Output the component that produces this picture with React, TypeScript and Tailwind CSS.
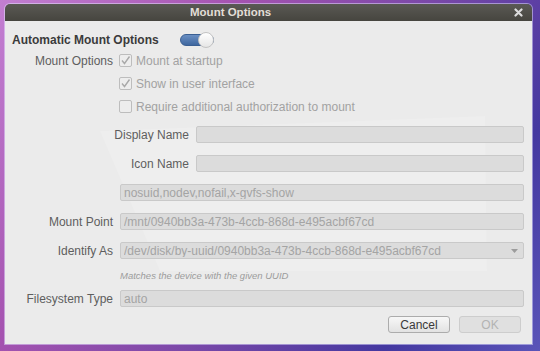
import type { ReactNode } from "react";

const font = { fontFamily: '"Liberation Sans", Arial, sans-serif' };

// Small disabled-looking checkbox, optionally ticked
const CheckBox = ({ checked, label }: { checked: boolean; label: string }) => (
  <div className="flex items-center gap-[4px]">
    <div className="w-[13px] h-[13px] rounded-[2px] border border-[#bdbdbd] bg-[#ededed] flex items-center justify-center">
      {checked && (
        <svg width="11" height="11" viewBox="0 0 11 11">
          <path d="M2 5.5 L4.5 8.5 L9.5 1.5" fill="none" stroke="#a9a9a9" strokeWidth="1.4" />
        </svg>
      )}
    </div>
    <span className="text-[12px] text-[#a2a2a2]">{label}</span>
  </div>
);

const Entry = ({ value, children }: { value?: string; children?: ReactNode }) => (
  <div className="flex-1 h-[17px] rounded-[2px] border border-[#c9c9c9] bg-[#dcdcdc] flex items-center pl-[3px] pr-[5px]">
    <span className="flex-1 text-[12px] text-[#a4a4a4] leading-none truncate">{value}</span>
    {children}
  </div>
);

// Labelled form row: label right-aligned in a fixed column
const Row = ({ label, labelWidth = 101, children }: { label: string; labelWidth?: number; children: ReactNode }) => (
  <div className="flex items-center h-[17px] gap-[7px] mt-[12px]">
    <span className="text-[12px] leading-none text-[#5e5e5e] text-right shrink-0" style={{ width: labelWidth }}>
      {label}
    </span>
    {children}
  </div>
);

export default function App() {
  return (
    <div
      className="w-[540px] h-[351px] overflow-hidden pt-[4px] pl-[5px] bg-[linear-gradient(125deg,#c37fd2_0%,#a553b0_30%,#7a48a8_55%,#4438a0_80%,#5a54b8_100%)]"
      style={font}
    >
      <div className="w-[527px] h-[340px] rounded-t-[5px] overflow-hidden flex flex-col shadow-[0_0_0_1px_rgba(230,230,255,0.5)]">
        {/* Title bar */}
        <div className="h-[17px] shrink-0 bg-[linear-gradient(#5a5954,#46453f)] flex items-center justify-between pl-[185px] pr-[9px]">
          <span className="text-[11.5px] font-bold text-[#e2ded6]">Mount Options</span>
          <svg width="9" height="9" viewBox="0 0 9 9">
            <path d="M1.5 1.5 L7.5 7.5 M7.5 1.5 L1.5 7.5" stroke="#dcdcdc" strokeWidth="2.2" strokeLinecap="round" />
          </svg>
        </div>

        {/* Body */}
        <div className="relative flex-1 bg-[#ebebeb] pl-[7px] pr-[8px] pt-[10px]">
          <div className="pointer-events-none absolute inset-0 bg-white/15 [clip-path:polygon(95px_110px,480px_95px,482px_250px,155px_250px)]" />

          <div className="relative">
            <div className="h-[18px] flex items-center">
              <span className="text-[12px] font-bold text-[#3b3b3b]">Automatic Mount Options</span>
              <div className="ml-[21px] relative w-[34px] h-[12px] rounded-full bg-[linear-gradient(#6a8fc3,#3f679f)] border border-[#3a5f93]">
                <div className="absolute right-[-1px] top-[-3px] w-[16px] h-[16px] rounded-full bg-[linear-gradient(#ffffff,#e6e6e6)] border border-[#c4c4c4]" />
              </div>
            </div>

            <div className="flex">
              <div className="w-[101px] h-[23px] flex items-center justify-end text-[12px] text-[#5e5e5e]">
                Mount Options
              </div>
              <div className="ml-[6px] flex flex-col">
                <div className="h-[23px] flex items-center">
                  <CheckBox checked label="Mount at startup" />
                </div>
                <div className="h-[23px] flex items-center">
                  <CheckBox checked label="Show in user interface" />
                </div>
                <div className="h-[23px] flex items-center">
                  <CheckBox checked={false} label="Require additional authorization to mount" />
                </div>
              </div>
            </div>

            <div className="mt-[-4px]">
              <Row label="Display Name" labelWidth={177}>
                <Entry />
              </Row>
              <Row label="Icon Name" labelWidth={177}>
                <Entry />
              </Row>
              <div className="flex h-[17px] mt-[12px] pl-[108px]">
                <Entry value="nosuid,nodev,nofail,x-gvfs-show" />
              </div>
              <Row label="Mount Point">
                <Entry value="/mnt/0940bb3a-473b-4ccb-868d-e495acbf67cd" />
              </Row>
              <Row label="Identify As">
                <Entry value="/dev/disk/by-uuid/0940bb3a-473b-4ccb-868d-e495acbf67cd">
                  <svg width="7" height="4" viewBox="0 0 7 4">
                    <path d="M0 0 L7 0 L3.5 4 Z" fill="#9c9c9c" />
                  </svg>
                </Entry>
              </Row>
              <div className="pl-[108px] h-[14px] mt-[10px] flex items-center">
                <span className="text-[9.5px] italic text-[#9c9c9c]">Matches the device with the given UUID</span>
              </div>
              <div className="flex items-center h-[17px] gap-[7px] mt-[7px]">
                <span className="w-[101px] text-[12px] leading-none text-[#5e5e5e] text-right shrink-0">Filesystem Type</span>
                <Entry value="auto" />
              </div>
            </div>

            <div className="flex justify-end gap-[9px] mt-[9px] pr-[3px]">
              <button className="w-[62px] h-[17px] rounded-[3px] border border-[#acacac] bg-[linear-gradient(#f7f7f7,#e2e2e2)] text-[12px] text-[#3a3a3a] leading-none">
                Cancel
              </button>
              <button className="w-[62px] h-[17px] rounded-[3px] border border-[#cdcdcd] bg-[#e0e0e0] text-[12px] text-[#b3b3b3] leading-none">
                OK
              </button>
            </div>
          </div>
        </div>
      </div>
    </div>
  );
}
